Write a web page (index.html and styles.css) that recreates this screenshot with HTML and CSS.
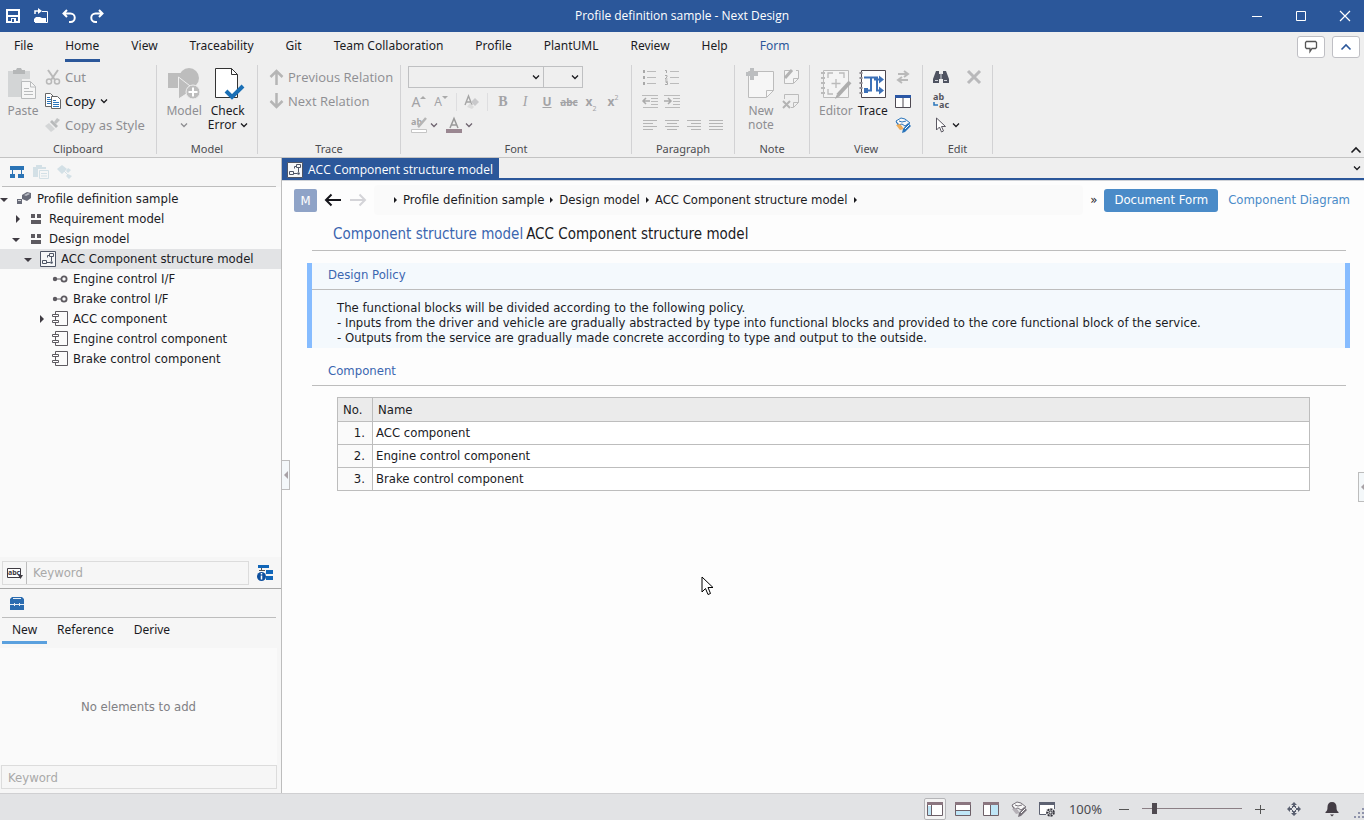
FILE: index.html
```html
<!DOCTYPE html>
<html lang="en">
<head>
    <meta charset="UTF-8">
    <title>Profile definition sample - Next Design</title>
    <link rel="stylesheet" href="styles.css">
</head>
<body>
<svg class="defs" width="0" height="0">
    <symbol id="caret" viewBox="0 0 8 8"><path d="M1 2.500l3 3 3-3" fill="none" stroke="currentColor" stroke-width="1.300"/></symbol>
    <symbol id="caret-up" viewBox="0 0 12 8"><path d="M1.500 6.500L6 2l4.500 4.500" fill="none" stroke="currentColor" stroke-width="1.600"/></symbol>
    <symbol id="struct" viewBox="0 0 16 16"><path d="M.5.5h15v15H.5z" fill="#f6f7f8" stroke="#4f5666"/><path d="M9.500 2.500h4v3h-4zM2.500 9.500h4v3h-4zM7.500 4.500h2M7.500 4.500v2M11.500 6v4M7 11.500h3" fill="none" stroke="#4f5666"/><circle cx="11.500" cy="11.500" r="1.300" fill="#4f5666"/></symbol>
    <symbol id="pkg" viewBox="0 0 12 12"><path d="M1 1h4v4H1zM7 1h4v4H7zM1 7h10v4H1z" fill="#5d5a60"/></symbol>
    <symbol id="iface" viewBox="0 0 16 8"><circle cx="3" cy="4" r="2.200" fill="#5d5a60"/><path d="M4 4h5" stroke="#5d5a60"/><circle cx="12" cy="4" r="2.600" fill="none" stroke="#5d5a60" stroke-width="1.800"/></symbol>
    <symbol id="comp" viewBox="0 0 16 16"><path d="M3.500 3V.5h12v14h-12V12M3.500 6v3" fill="none" stroke="#5d5a60"/><path d="M.5 3.500h6v2h-6zM.5 9.500h6v2h-6z" fill="#fff" stroke="#5d5a60"/></symbol>
    <symbol id="scan" viewBox="0 0 16 16"><path d="M1 4l5-3 4 1 5 4-5 3-3-2-4 1z" fill="#f8f8f8" stroke="var(--a)"/><path d="M4 4l3 1 4-1M1 5l6 5" fill="none" stroke="var(--a)"/><path d="M1 8l4 5 4-1-4-5z" fill="var(--b)"/><path d="M13 6l3 3-6 6-3 1 1-4z" fill="var(--a)"/><path d="M10 12l4-4" stroke="#fff"/></symbol>
</svg>

<header class="titlebar">
    <div class="quick">
        <button aria-label="Save"><svg width="16" height="16" viewBox="0 0 16 16"><path d="M2 2h12v12H2zM2 8h12" fill="none" stroke="#fff" stroke-width="2"/><path d="M6 10h5v4H6z" fill="#fff"/><path d="M7 11h2v3H7z" fill="#2b579a"/></svg></button>
        <button aria-label="Open"><svg width="16" height="16" viewBox="0 0 16 16"><path d="M9 3.500h5.500v11H2" fill="none" stroke="#fff"/><path d="M1 14v-3l2-2h4l2 1h4v4z" fill="#fff"/><path d="M2 6V3h4" fill="none" stroke="#fff" stroke-width="1.500"/><path d="M5 0l4 3-4 3z" fill="#fff"/></svg></button>
        <button aria-label="Undo"><svg width="16" height="16" viewBox="0 0 16 16"><path d="M6 2L2.500 5.500 6 9M3 5.500h6.500a4 4 0 010 8.500H8" fill="none" stroke="#fff" stroke-width="2"/></svg></button>
        <button aria-label="Redo"><svg width="16" height="16" viewBox="0 0 16 16"><path d="M10 2l3.500 3.500L10 9M13 5.500H6.500a4 4 0 000 8.500H8" fill="none" stroke="#fff" stroke-width="2"/></svg></button>
    </div>
    <h1>Profile definition sample - Next Design</h1>
    <div class="winbtns">
        <button aria-label="Minimize"><svg width="12" height="12" viewBox="0 0 12 12"><path d="M1 6.500h10" stroke="#fff"/></svg></button>
        <button aria-label="Maximize"><svg width="12" height="12" viewBox="0 0 12 12"><path d="M1.500 1.500h9v9h-9z" fill="none" stroke="#fff"/></svg></button>
        <button aria-label="Close"><svg width="12" height="12" viewBox="0 0 12 12"><path d="M1 1l10 10M11 1L1 11" stroke="#fff" stroke-width="1.200"/></svg></button>
    </div>
</header>

<nav class="menu">
    <button>File</button>
    <button class="active">Home</button>
    <button>View</button>
    <button>Traceability</button>
    <button>Git</button>
    <button>Team Collaboration</button>
    <button>Profile</button>
    <button>PlantUML</button>
    <button>Review</button>
    <button>Help</button>
    <button class="form">Form</button>
    <div class="menu-right">
        <button aria-label="Feedback"><svg width="14" height="14" viewBox="0 0 14 14"><path d="M2.500 1.500h9l1 1v5l-1 1H8L6 11.500V8.500H2.500l-1-1v-5z" fill="none" stroke="#555" stroke-width="1.300"/></svg></button>
        <button class="blue" aria-label="Collapse"><svg width="12" height="8"><use href="#caret-up"/></svg></button>
    </div>
</nav>

<div class="ribbon">
    <section class="group g-clip">
        <div class="body">
            <button class="big" disabled><svg width="32" height="36" viewBox="0 0 32 36"><path d="M1 4h22v8h-8v18H1z" fill="#d3d5d6"/><path d="M6 3h3l1-2h4l1 2h3v4H6z" fill="#b5b7b8"/><path d="M14.500 14.500h9l5 5v12h-14z" fill="#f6f6f6" stroke="#b9bbbc"/><path d="M23.500 15v5h5M17 21.500h5M17 24.500h9M17 27.500h9" fill="none" stroke="#b9bbbc"/></svg><span>Paste</span></button>
            <div class="rows">
                <button disabled><svg width="16" height="16" viewBox="0 0 16 16"><path d="M3 1l7 10M13 1L6 11" stroke="#b9b9b9" stroke-width="2"/><circle cx="4" cy="12.500" r="2.500" fill="none" stroke="#b9b9b9" stroke-width="1.500"/><circle cx="12" cy="12.500" r="2.500" fill="none" stroke="#b9b9b9" stroke-width="1.500"/></svg>Cut</button>
                <button><svg width="16" height="16" viewBox="0 0 16 16"><path d="M.5.5h5l3 3v10h-8z" fill="#fff" stroke="#666"/><path d="M2 4.500h3M2 6.500h4M2 8.500h4M2 10.500h4" stroke="#2a75bb"/><path d="M6.500 3.500h6l3 3v9h-9z" fill="#fff" stroke="#666"/><path d="M8 7.500h3M8 9.500h6M8 11.500h6M8 13.500h6" stroke="#2a75bb"/></svg>Copy<svg class="car" width="8" height="8"><use href="#caret"/></svg></button>
                <button disabled><svg width="16" height="16" viewBox="0 0 16 16"><path d="M12 1l3 2-4 4-2-2z" fill="#c1c3c4"/><path d="M7 3l6 6-2 2-6-6z" fill="#b8babb"/><path d="M4 6l6 6-4 3-6-6z" fill="#d4d6d7"/></svg>Copy as Style</button>
            </div>
        </div>
        <h2>Clipboard</h2>
    </section>
    <section class="group g-model">
        <div class="body">
            <button class="big" disabled><svg width="32" height="36" viewBox="0 0 32 36"><circle cx="21" cy="11" r="10" fill="#bdbdbd"/><path d="M0 6h15v15H0z" fill="#bdbdbd"/><path d="M10.500 10v22L26 22z" fill="#bdbdbd" stroke="#efefef"/><circle cx="25" cy="25" r="7" fill="#bdbdbd" stroke="#efefef"/><path d="M20.500 25h9M25 20.500v9" stroke="#fff" stroke-width="2"/></svg><span>Model</span><svg class="low" width="8" height="8"><use href="#caret"/></svg></button>
            <button class="big"><svg width="32" height="36" viewBox="0 0 32 36"><path d="M3.500 1.500h16l6 6v23h-22z" fill="#fff" stroke="#333"/><path d="M19.500 1.500v6h6" fill="none" stroke="#333"/><path d="M14 24l6 6 11-11" fill="none" stroke="#1a6fb5" stroke-width="4"/></svg><span>Check<br>Error <svg width="8" height="8"><use href="#caret"/></svg></span></button>
        </div>
        <h2>Model</h2>
    </section>
    <section class="group g-trace">
        <div class="body">
            <div class="rows">
                <button disabled><svg width="15" height="16" viewBox="0 0 15 16"><path d="M7.500 16V2M1.500 8l6-6 6 6" fill="none" stroke="#b5b5b5" stroke-width="2.500"/></svg>Previous Relation</button>
                <button disabled><svg width="15" height="16" viewBox="0 0 15 16"><path d="M7.500 0v14M1.500 8l6 6 6-6" fill="none" stroke="#b5b5b5" stroke-width="2.500"/></svg>Next Relation</button>
            </div>
        </div>
        <h2>Trace</h2>
    </section>
    <section class="group g-font">
        <div class="body rows">
            <div class="combos">
                <label class="combo wide"><select aria-label="Font family"><option></option></select><svg width="8" height="8"><use href="#caret"/></svg></label>
                <label class="combo"><select aria-label="Font size"><option></option></select><svg width="8" height="8"><use href="#caret"/></svg></label>
            </div>
            <div class="tools">
                <button disabled class="grow" aria-label="Grow font">A<svg width="6" height="12" viewBox="0 0 6 12"><path d="M3 0l3 3H0z" fill="#aaa"/></svg></button>
                <button disabled class="shrink" aria-label="Shrink font">A<svg width="6" height="12" viewBox="0 0 6 12"><path d="M0 0h6L3 3z" fill="#aaa"/></svg></button>
                <i class="sep"></i>
                <button disabled aria-label="Clear format"><svg width="16" height="16" viewBox="0 0 16 16"><path d="M1 11L4.500 2 8 11M2 8h5" fill="none" stroke="#a5a5a5" stroke-width="1.400"/><path d="M11 4l4 4-4 4-4-4z" fill="#c9c9cb"/><path d="M6 9l4 4-2 2-5-2z" fill="#dcdcdc"/></svg></button>
                <i class="sep"></i>
                <button disabled class="serif bold">B</button>
                <button disabled class="serif ital">I</button>
                <button disabled class="under">U</button>
                <button disabled class="strike">abc</button>
                <button disabled class="script">x<sub>2</sub></button>
                <button disabled class="script">x<sup>2</sup></button>
            </div>
            <div class="tools pair">
                <button disabled aria-label="Highlight"><svg width="16" height="16" viewBox="0 0 16 16"><text x="0" y="8" class="hl">ab</text><path d="M15 1l-6 7-2 2" stroke="#b5b5b5" stroke-width="2.500"/><path d="M.5 12.500h15v3H.5z" fill="#fff" stroke="#c5c5c5"/></svg></button>
                <svg width="8" height="8"><use href="#caret"/></svg>
                <button disabled aria-label="Font color"><svg width="16" height="16" viewBox="0 0 16 16"><path d="M4 11L8 1.500 12 11M5.500 8h5" fill="none" stroke="#999" stroke-width="1.500"/><path d="M0 12h16v4H0z" fill="#9a8791"/></svg></button>
                <svg width="8" height="8"><use href="#caret"/></svg>
            </div>
        </div>
        <h2>Font</h2>
    </section>
    <section class="group g-para">
        <div class="body rows">
            <div class="tools">
                <button disabled aria-label="Bullets"><svg width="16" height="16" viewBox="0 0 16 16"><path d="M5 2.500h9M5 8.500h9M5 14.500h9" stroke="#bbb"/><path d="M1 1h2v3H1zM1 7h2v3H1zM1 13h2v3H1z" fill="#a9a9a9"/></svg></button>
                <button disabled aria-label="Numbering"><svg width="16" height="16" viewBox="0 0 16 16"><path d="M6 2.500h9M6 8.500h9M6 14.500h9" stroke="#bbb"/><path d="M1 1.500h1.500V4M1 6.500h2v1.500l-2 2h2.500M1 12h2.500L2 13.500h1.500v2H1" fill="none" stroke="#a9a9a9"/></svg></button>
            </div>
            <div class="tools">
                <button disabled aria-label="Outdent"><svg width="16" height="16" viewBox="0 0 16 16"><path d="M0 2.500h16M9 5.500h7M9 8.500h7M9 11.500h7M1 14.500h15" stroke="#bbb"/><path d="M8 8H1M4 5L1 8l3 3" fill="none" stroke="#aaa" stroke-width="1.500"/></svg></button>
                <button disabled aria-label="Indent"><svg width="16" height="16" viewBox="0 0 16 16"><path d="M0 2.500h16M9 5.500h7M9 8.500h7M9 11.500h7M1 14.500h15" stroke="#bbb"/><path d="M0 8h7M4 5l3 3-3 3" fill="none" stroke="#aaa" stroke-width="1.500"/></svg></button>
            </div>
            <div class="tools">
                <button disabled aria-label="Left"><svg width="16" height="16" viewBox="0 0 16 16"><path d="M1 3.500h14M1 6.500h10M1 9.500h14M1 12.500h10" stroke="#b5b5b5"/></svg></button>
                <button disabled aria-label="Center"><svg width="16" height="16" viewBox="0 0 16 16"><path d="M1 3.500h14M3 6.500h10M1 9.500h14M3 12.500h10" stroke="#b5b5b5"/></svg></button>
                <button disabled aria-label="Right"><svg width="16" height="16" viewBox="0 0 16 16"><path d="M1 3.500h14M5 6.500h10M1 9.500h14M5 12.500h10" stroke="#b5b5b5"/></svg></button>
                <button disabled aria-label="Justify"><svg width="16" height="16" viewBox="0 0 16 16"><path d="M1 3.500h14M1 6.500h14M1 9.500h14M1 12.500h14" stroke="#b5b5b5"/></svg></button>
            </div>
        </div>
        <h2>Paragraph</h2>
    </section>
    <section class="group g-note">
        <div class="body">
            <button class="big" disabled><svg width="32" height="36" viewBox="0 0 32 36"><path d="M3.500 4.500h25v19l-7 7h-18z" fill="#f6f6f6" stroke="#bcbcbc"/><path d="M21.500 30v-6.500h7" fill="none" stroke="#bcbcbc"/><path d="M7 1v12M1 7h12" stroke="#bcbec0" stroke-width="4"/></svg><span>New<br>note</span></button>
            <div class="icons">
                <button disabled aria-label="Edit note"><svg width="16" height="16" viewBox="0 0 16 16"><path d="M8 1.500H1.500v13h9l5-5v-8H13" fill="#f4f4f4" stroke="#bbb"/><path d="M10.500 14V9.500h5" fill="none" stroke="#bbb"/><path d="M2 9l7-8" stroke="#b3b3b3" stroke-width="3"/></svg></button>
                <button disabled aria-label="Delete note"><svg width="16" height="16" viewBox="0 0 16 16"><path d="M1.500 6V1.500h14v8l-5 5H8" fill="none" stroke="#bbb"/><path d="M10.500 14V9.500h5" fill="none" stroke="#bbb"/><path d="M0 8l7 7M7 8l-7 7" stroke="#b3b3b3" stroke-width="2"/></svg></button>
            </div>
        </div>
        <h2>Note</h2>
    </section>
    <section class="group g-view">
        <div class="body">
            <button class="big" disabled><svg width="32" height="36" viewBox="0 0 32 36"><path d="M3.500 3.500h25v27h-25z" fill="#f4f4f4" stroke="#bbb"/><path d="M8 11V6h5M19 6h5v5M8 22v5h5M16 12v9M11.500 16.500h9" fill="none" stroke="#bbb" stroke-width="1.300"/><path d="M3 5v25" stroke="#bbb" stroke-width="4" stroke-dasharray="2 3"/><path d="M30 15L18 28" stroke="#adadad" stroke-width="4"/><path d="M17 27l3 2-5 3z" fill="#adadad"/></svg><span>Editor</span></button>
            <button class="big"><svg width="32" height="36" viewBox="0 0 32 36"><path d="M4.500 3.500h24v27h-24z" fill="#fff" stroke="#4e4950"/><path d="M4 5v25" stroke="#8d8a90" stroke-width="3" stroke-dasharray="2 3"/><path d="M7 10.500h13v13M10 23.500h4v-13M17 12.500h7M19 23.500h5" fill="none" stroke="#3c71b8" stroke-width="2"/><path d="M22 8.500l5 4-5 4zM22 19.500l5 4-5 4zM7 21h4v5H7z" fill="#3c71b8"/></svg><span>Trace</span></button>
            <div class="icons">
                <button disabled aria-label="Swap"><svg width="16" height="16" viewBox="0 0 16 16"><path d="M3 5h10M13 11H3M9 2l4 3-4 3M7 8l-4 3 4 3" fill="none" stroke="#b9b9b9" stroke-width="2"/></svg></button>
                <button aria-label="Split"><svg width="16" height="16" viewBox="0 0 16 16"><path d="M.5 2.500h15v12H.5zM8 5v9" fill="#fff" stroke="#4f4a52"/><path d="M0 2h16v3H0z" fill="#2b57a5"/></svg></button>
                <button class="scan-blue" aria-label="Inspect"><svg width="16" height="16"><use href="#scan"/></svg></button>
            </div>
        </div>
        <h2>View</h2>
    </section>
    <section class="group g-edit">
        <div class="body rows">
            <div class="tools">
                <button aria-label="Find"><svg width="16" height="16" viewBox="0 0 16 16"><path d="M3 2h3v3h4V2h3l3 8v4h-6v-4H6v4H0v-4z" fill="#4f5361"/><path d="M8 4v6M2 11.500h3M11 11.500h3" stroke="#d5d7dc"/></svg></button>
                <button class="del" disabled aria-label="Delete"><svg width="16" height="16" viewBox="0 0 16 16"><path d="M2 2l12 12M14 2L2 14" stroke="#b9b9bb" stroke-width="3"/></svg></button>
            </div>
            <div class="tools">
                <button aria-label="Replace"><svg width="18" height="18" viewBox="0 0 18 18"><text x="1" y="8" class="rep">ab</text><text x="7" y="16" class="rep">ac</text><path d="M2 10v3h4" fill="none" stroke="#2a75bb" stroke-width="1.500"/></svg></button>
            </div>
            <div class="tools">
                <button aria-label="Select"><svg width="16" height="16" viewBox="0 0 16 16"><path d="M3.500 1v12l3-3 2 5 2-1-2-4.500h4z" fill="#fff" stroke="#5b5862"/></svg></button>
                <svg width="8" height="8"><use href="#caret"/></svg>
            </div>
        </div>
        <h2>Edit</h2>
    </section>
    <button class="ribbon-fold" aria-label="Fold ribbon"><svg width="12" height="8"><use href="#caret-up"/></svg></button>
</div>

<div class="work">
    <aside class="side">
        <div class="side-tools">
            <button aria-label="Tree"><svg width="16" height="16" viewBox="0 0 16 16"><path d="M1 2h14v4H1zM1 10h5v4H1zM9 10h6v4H9z" fill="#2a73b5"/><path d="M3.500 6v4M12.500 6v4" stroke="#2a73b5"/></svg></button>
            <button disabled aria-label="Pages"><svg width="16" height="16" viewBox="0 0 16 16"><path d="M0 3h3V1h6v2h4v2H5v8H0z" fill="#d3e0e6"/><path d="M6.500 6.500h9v8h-9zM8 9.500h6M8 12h6" fill="none" stroke="#d3e0e6"/></svg></button>
            <button disabled aria-label="Relations"><svg width="16" height="16" viewBox="0 0 16 16"><path d="M5 1l5 4-5 5-5-5zM11 4l3 2-3 3-2-2zM11 10l4 2-3 3-3-3z" fill="#d3e0e6"/><path d="M5 5l7 7" stroke="#d3e0e6"/></svg></button>
        </div>
        <ul class="tree">
            <li class="l0 open"><em></em><svg width="14" height="14" viewBox="0 0 14 14"><path d="M5 3l5-3 4 1v5l-4 3-5-2z" fill="#686b78"/><path d="M7 3l4-2 2 1-4 2z" fill="#b9bbc3"/><path d="M0 7h5v5H0z" fill="#686b78"/><path d="M1 8.500h3" stroke="#d5d6db"/></svg><span>Profile definition sample</span></li>
            <li class="l1 closed"><em></em><svg width="12" height="12"><use href="#pkg"/></svg><span>Requirement model</span></li>
            <li class="l1 open"><em></em><svg width="12" height="12"><use href="#pkg"/></svg><span>Design model</span></li>
            <li class="l2 open selected"><em></em><svg width="16" height="16"><use href="#struct"/></svg><span>ACC Component structure model</span></li>
            <li class="l3"><em></em><svg width="16" height="8"><use href="#iface"/></svg><span>Engine control I/F</span></li>
            <li class="l3"><em></em><svg width="16" height="8"><use href="#iface"/></svg><span>Brake control I/F</span></li>
            <li class="l3 closed"><em></em><svg width="16" height="16"><use href="#comp"/></svg><span>ACC component</span></li>
            <li class="l3"><em></em><svg width="16" height="16"><use href="#comp"/></svg><span>Engine control component</span></li>
            <li class="l3"><em></em><svg width="16" height="16"><use href="#comp"/></svg><span>Brake control component</span></li>
        </ul>
        <div class="search">
            <div class="field">
                <button aria-label="Match mode"><svg width="18" height="14" viewBox="0 0 18 14"><path d="M1.500 2.500h13v9h-13z" fill="#fff" stroke="#3f3b42"/><text x="2" y="9" class="abc">abc</text><path d="M12 9h5l-2.500 4z" fill="#3f3b42"/></svg></button>
                <input type="text" placeholder="Keyword" aria-label="Search tree">
            </div>
            <button aria-label="Tree info"><svg width="16" height="16" viewBox="0 0 16 16"><path d="M1 0h11v3H1zM9 5h7v4H9zM9 11h7v4H9z" fill="#1166b8"/><path d="M4.500 3v3M2 5.500h6" stroke="#555"/><circle cx="4.500" cy="11.500" r="4.500" fill="#0d4f9e"/><path d="M4.500 10.500v4M4.500 8v1.500" stroke="#fff" stroke-width="1.500"/></svg></button>
        </div>
        <div class="side-tools second">
            <button aria-label="Toolbox"><svg width="16" height="16" viewBox="0 0 16 16"><path d="M3 1h10l2 2v11H1V3z" fill="#2b6cb0"/><path d="M4 2.500h8M1 8.500h14M5.500 7v3M10.500 7v3" stroke="#e8eef5"/></svg></button>
        </div>
        <div class="tabs">
            <button class="active">New</button>
            <button>Reference</button>
            <button>Derive</button>
        </div>
        <p class="empty">No elements to add</p>
        <input class="filter" type="text" placeholder="Keyword" aria-label="Filter elements">
        <button class="handle" aria-label="Collapse side panel"></button>
    </aside>

    <main class="editor">
        <div class="doc-tabs">
            <button class="doc-tab"><svg width="16" height="16"><use href="#struct"/></svg>ACC Component structure model</button>
            <button class="more" aria-label="More tabs"><svg width="8" height="8"><use href="#caret"/></svg></button>
        </div>
        <div class="nav">
            <span class="badge">M</span>
            <button aria-label="Back"><svg width="18" height="14" viewBox="0 0 18 14"><path d="M17 7H2M7.500 1.500L2 7l5.500 5.500" fill="none" stroke="#16161c" stroke-width="2"/></svg></button>
            <button disabled aria-label="Forward"><svg width="18" height="14" viewBox="0 0 18 14"><path d="M1 7h15M10.500 1.500L16 7l-5.500 5.500" fill="none" stroke="#d4d4d8" stroke-width="2"/></svg></button>
            <div class="crumbs">
                <i></i><a href="#">Profile definition sample</a>
                <i></i><a href="#">Design model</a>
                <i></i><a href="#">ACC Component structure model</a>
                <i></i>
            </div>
            <span class="chev">»</span>
            <button class="view on">Document Form</button>
            <button class="view">Component Diagram</button>
        </div>
        <div class="doc">
            <h3 class="doc-title"><span>Component structure model</span>ACC Component structure model</h3>
            <section class="policy">
                <h4>Design Policy</h4>
                <p>The functional blocks will be divided according to the following policy.<br>- Inputs from the driver and vehicle are gradually abstracted by type into functional blocks and provided to the core functional block of the service.<br>- Outputs from the service are gradually made concrete according to type and output to the outside.</p>
            </section>
            <section class="comps">
                <h4>Component</h4>
                <table>
                    <thead>
                        <tr><th class="no">No.</th><th>Name</th></tr>
                    </thead>
                    <tbody>
                        <tr><td class="no">1.</td><td>ACC component</td></tr>
                        <tr><td class="no">2.</td><td>Engine control component</td></tr>
                        <tr><td class="no">3.</td><td>Brake control component</td></tr>
                    </tbody>
                </table>
            </section>
        </div>
        <button class="handle right" aria-label="Expand inspector"></button>
    </main>
</div>

<footer class="status">
    <button class="on" aria-label="Left pane"><svg width="16" height="14" viewBox="0 0 16 14"><path d="M.5.5h15v13H.5z" fill="#fff" stroke="#6d6068"/><path d="M1 4h3v9H1z" fill="#bfe6f7"/><path d="M0 0h16v3H0z" fill="#8b7680"/><path d="M4.500 3v10" stroke="#6d6068"/></svg></button>
    <button aria-label="Bottom pane"><svg width="16" height="14" viewBox="0 0 16 14"><path d="M.5.5h15v13H.5z" fill="#fff" stroke="#6d6068"/><path d="M1 9h14v4H1z" fill="#bfe6f7"/><path d="M0 0h16v3H0z" fill="#8b7680"/><path d="M1 8.500h14" stroke="#6d6068"/></svg></button>
    <button aria-label="Right pane"><svg width="16" height="14" viewBox="0 0 16 14"><path d="M.5.5h15v13H.5z" fill="#fff" stroke="#6d6068"/><path d="M8 3h7v10H8z" fill="#bfe6f7"/><path d="M0 0h16v3H0z" fill="#8b7680"/><path d="M7.500 3v10" stroke="#6d6068"/></svg></button>
    <button class="scan-gray" aria-label="Inspect"><svg width="16" height="16"><use href="#scan"/></svg></button>
    <button aria-label="View settings"><svg width="16" height="16" viewBox="0 0 16 16"><path d="M.5 1.500h15v12H.5z" fill="#fff" stroke="#5d6272"/><path d="M0 1h16v3H0z" fill="#5d6272"/><path d="M7 8h9v7H7z" fill="#e2e3e5"/><circle cx="11.500" cy="11.500" r="3.300" fill="none" stroke="#33333b" stroke-width="2" stroke-dasharray="2 1"/><circle cx="11.500" cy="11.500" r="1.500" fill="none" stroke="#33333b"/></svg></button>
    <span class="pct">100%</span>
    <button aria-label="Zoom out"><svg width="10" height="10" viewBox="0 0 10 10"><path d="M0 5.500h10" stroke="#555"/></svg></button>
    <input type="range" min="0" max="100" value="10" aria-label="Zoom">
    <button aria-label="Zoom in"><svg width="10" height="10" viewBox="0 0 10 10"><path d="M0 5.500h10M5.500 1v9" stroke="#555"/></svg></button>
    <button class="fit" aria-label="Fit"><svg width="16" height="16" viewBox="0 0 16 16"><path d="M8 1l3 3H5zM8 15l3-3H5zM1 8l3-3v6zM15 8l-3-3v6z" fill="#5a6070"/><path d="M6 6h1M9 6h1M6 10h1M9 10h1M8 4v2M8 10v2M4 8h2M10 8h2" stroke="#5a6070" stroke-width="2"/></svg></button>
    <button class="bell" aria-label="Notifications"><svg width="14" height="16" viewBox="0 0 14 16"><path d="M7 1c3 0 4.500 2 4.500 5 0 3 .5 4 2 5v1H.5v-1c1.500-1 2-2 2-5 0-3 1.500-5 4.500-5z" fill="#433d45"/><path d="M5 13.500h4L7 15.500z" fill="#433d45"/></svg></button>
    <svg class="grip" width="10" height="10" viewBox="0 0 10 10"><path d="M8 0h2v2H8zM4 4h2v2H4zM8 4h2v2H8zM0 8h2v2H0zM4 8h2v2H4zM8 8h2v2H8z" fill="#8f93ab"/></svg>
</footer>

<svg class="pointer" width="13" height="20" viewBox="0 0 13 20"><path d="M1 1v15l3.500-3.500L7 18.500l2.500-1L7 11.500h5z" fill="#fff" stroke="#000"/></svg>
</body>
</html>
```
FILE: styles.css
```css
*{
    margin:0;
    padding:0;
    box-sizing: border-box;
    list-style: none;
}
html,body{
    height: 100%;
}
body{
    display: flex;
    flex-direction: column;
    overflow: hidden;
    background: #efefef;
    color: #1b1b1f;
    font: 13px/20px "Noto Sans", sans-serif;
}
button,input,select{
    font: inherit;
    color: inherit;
    border: none;
    background: none;
}
button{
    display: flex;
    align-items: center;
    justify-content: center;
    white-space: nowrap;
}
button:disabled{
    color: #8e8e92;
}
svg{
    flex: none;
    display: block;
    overflow: visible;
}
h1,h2,h3,h4,th{
    font-weight: normal;
    font-size: 13px;
}
.defs{
    position: absolute;
}

/* title bar */
.titlebar{
    display: grid;
    grid-template-columns: 1fr auto 1fr;
    align-items: center;
    height: 32px;
    flex: none;
    background: #2b579a;
    color: #fff;
}
.titlebar h1{
    font-family: "Open Sans", sans-serif;
    font-size: 12px;
}
.quick{
    display: flex;
    gap: 12px;
    padding-left: 5px;
}
.winbtns{
    display: flex;
    justify-content: flex-end;
}
.winbtns button{
    width: 44px;
    height: 32px;
}
.winbtns button:last-child{
    width: 38px;
    margin-left: 3px;
}

/* menu */
.menu{
    display: flex;
    gap: 31px;
    height: 30px;
    flex: none;
    padding-left: 14px;
}
.menu > button{
    padding: 1px 1px 0 0;
    border-bottom: 3px solid transparent;
    font-size: 12px;
}
.menu > .active{
    border-color: #2b579a;
}
.menu .form,.blue{
    color: #2b579a;
}
.menu-right{
    display: flex;
    gap: 7px;
    margin-left: auto;
    padding: 4px 4px 0 0;
}
.menu-right button{
    width: 28px;
    height: 22px;
    background: #fff;
    border: 1px solid #bfbfc4;
    border-radius: 3px;
}

/* ribbon */
.ribbon{
    display: flex;
    flex: none;
    padding: 3px 0;
    border-bottom: 1px solid #c3c3c3;
}
.group{
    display: flex;
    flex-direction: column;
    border-right: 1px solid #d2d2d4;
}
.group h2{
    color: #4c4c50;
    font-size: 11px;
    line-height: 10px;
    padding-top: 1px;
    text-align: center;
}
.body{
    display: flex;
    height: 78px;
}
.big{
    flex-direction: column;
    justify-content: flex-start;
    padding-top: 2px;
    font-size: 12px;
    line-height: 14px;
}
.big > svg{
    margin-bottom: 1px;
}
.big .low{
    margin-top: 3px;
}
.big span svg{
    display: inline-block;
}
.rows{
    display: flex;
    flex-direction: column;
}
.rows > button{
    height: 24px;
    gap: 4px;
    justify-content: flex-start;
}
.icons button{
    width: 20px;
    height: 24px;
}
.tools{
    display: flex;
    align-items: center;
    height: 24px;
}
.tools button{
    width: 22px;
    height: 22px;
}
.rows .car{
    margin-left: 1px;
}
.g-clip{
    width: 157px;
}
.g-clip .body{
    padding-left: 7px;
    gap: 6px;
}
.g-model{
    width: 101px;
}
.g-model .body{
    justify-content: center;
    gap: 6px;
}
.g-trace{
    width: 143px;
}
.g-trace .body{
    padding-left: 11px;
    font-family: "Open Sans", sans-serif;
}
.g-font{
    width: 231px;
}
.g-font .body{
    padding: 1px 0 0 7px;
}
.g-font .combos + .tools{
    height: 23px;
}
.combos{
    display: flex;
    height: 24px;
}
.combo{
    display: grid;
    width: 40px;
    height: 22px;
    margin-left: -1px;
    border: 1px solid #bfc0c2;
    align-items: center;
}
.combo.wide{
    width: 136px;
    margin-left: 0;
}
.combo select,.combo svg{
    grid-area: 1/1;
}
.combo select{
    appearance: none;
    width: 100%;
    height: 20px;
}
.combo svg{
    justify-self: end;
    margin-right: 3px;
}
.sep{
    width: 1px;
    height: 18px;
    margin: 0 4px;
    background: #dedee0;
}
.g-font .tools button{
    color: #a3a3a6;
}
.g-font .tools{
    color: #6f6470;
}
.grow{
    font-size: 14px;
}
.shrink{
    font-size: 12px;
}
.serif{
    font-family: "Liberation Serif", serif;
    font-size: 14px;
}
.bold{
    font-weight: bold;
}
.ital{
    font-style: italic;
}
.under{
    font-weight: bold;
    font-size: 12px;
    text-decoration: underline;
}
.strike{
    font-size: 10px;
    font-weight: bold;
    text-decoration: line-through;
}
.script{
    font-size: 12px;
    font-weight: bold;
}
.script sub,.script sup{
    font-size: 7px;
    line-height: 8px;
    font-weight: normal;
}
.script sub{
    align-self: flex-end;
}
.script sup{
    align-self: flex-start;
    padding-top: 3px;
}
.hl,.rep,.abc{
    font-family: "Noto Sans", sans-serif;
    font-weight: bold;
    font-size: 9px;
    fill: #a5a5a5;
}
.rep{
    fill: #55555c;
}
.abc{
    font-size: 7px;
    fill: #3f3b42;
}
.pair svg{
    margin-right: 5px;
}
.pair button svg{
    margin: 0;
}
.g-para{
    width: 103px;
}
.g-para .body{
    padding-left: 7px;
}
.g-note{
    width: 75px;
}
.g-note .body{
    padding-left: 10px;
    gap: 4px;
}
.g-view{
    width: 113px;
}
.g-view .body{
    padding-left: 9px;
    gap: 4px;
}
.g-edit{
    width: 70px;
}
.g-edit .body{
    padding-left: 7px;
}
.del{
    margin-left: 11px;
}
.scan-blue{
    --a: #2a75bb;
    --b: #f0ad58;
}
.scan-gray{
    --a: #77727a;
    --b: #b5b1b7;
}
.ribbon-fold{
    margin: auto 2px 0 auto;
}

/* side panel */
.work{
    display: flex;
    flex: 1;
    min-height: 0;
    font-family: "DejaVu Sans Condensed", "Noto Sans", sans-serif;
}
.side{
    position: relative;
    display: flex;
    flex-direction: column;
    width: 282px;
    flex: none;
    background: #f6f6f6;
    border-right: 1px solid #bdbdbd;
}
.side-tools{
    display: flex;
    gap: 8px;
    height: 29px;
    margin: 0 5px 0 2px;
    padding-left: 7px;
    border-bottom: 1px solid #bdbdbd;
}
.side-tools.second{
    padding-top: 2px;
}
.tree{
    flex: 1;
    padding-top: 2px;
    background: #fafafa;
}
.tree li{
    display: flex;
    align-items: center;
    gap: 5px;
    height: 20px;
}
.tree .selected{
    background: #e2e3e5;
}
.tree span{
    white-space: nowrap;
}
.tree em{
    width: 8px;
    margin-right: 4px;
}
.open em::before{
    content: "";
    display: block;
    border: 4px solid transparent;
    border-top-color: #3f3b42;
    margin-top: 5px;
}
.closed em::before{
    content: "";
    display: block;
    border: 4px solid transparent;
    border-left-color: #3f3b42;
    margin-left: 4px;
}
.tree .l0 svg{
    margin-right: 1px;
}
.l1{
    padding-left: 12px;
}
.l2{
    padding-left: 24px;
}
.tree .l2 em{
    margin-right: 3px;
}
.l3{
    padding-left: 36px;
}
.tree .l3 em{
    margin-right: 3px;
}
.tree .l1 svg{
    margin: 0 2px 0 1px;
}
.search{
    display: flex;
    align-items: center;
    gap: 8px;
    height: 32px;
    padding: 0 8px 0 2px;
    border-bottom: 1px solid #a8a8a8;
}
.field{
    display: flex;
    flex: 1;
    height: 24px;
    border: 1px solid #dcdcdc;
}
.field button{
    width: 24px;
    border-right: 1px solid #bdbdbd;
}
.field input{
    flex: 1;
    min-width: 0;
    padding-left: 6px;
}
input::placeholder{
    color: #a9a9a9;
}
.tabs{
    display: flex;
    height: 26px;
    padding-left: 2px;
    font-family: "Noto Sans", sans-serif;
}
.tabs button{
    padding: 0 10px;
    border-bottom: 3px solid transparent;
    font-size: 12px;
}
.tabs .active{
    border-color: #5aa0de;
}
.empty{
    display: flex;
    align-items: center;
    justify-content: center;
    height: 117px;
    margin: 4px 4px 0 0;
    background: #fafafa;
    color: #808084;
}
.filter{
    height: 24px;
    margin: 0 4px 4px 1px;
    padding-left: 6px;
    border: 1px solid #dcdcdc;
}
.handle{
    position: absolute;
    top: 302px;
    left: 281px;
    z-index: 1;
    width: 9px;
    height: 30px;
    background: #f4f8fa;
    border: 1px solid #bdbdbd;
}
.handle::before{
    content: "";
    border: 4px solid transparent;
    border-right-color: #a8a2a6;
    border-left: none;
}
.handle.right{
    top: 314px;
    right: -3px;
    left: auto;
}

/* editor */
.editor{
    position: relative;
    flex: 1;
    min-width: 0;
    background: #fdfdfd;
    overflow: hidden;
}
.doc-tabs{
    display: flex;
    justify-content: space-between;
    height: 22px;
    background: #efefef;
    border-bottom: 2px solid #2b579a;
}
.doc-tab{
    gap: 5px;
    padding: 3px 6px 0 5px;
    background: #2b579a;
    color: #fff;
    font-family: "Open Sans", sans-serif;
    font-size: 12px;
}
.more{
    padding-right: 3px;
}
.nav{
    display: flex;
    align-items: center;
    gap: 7px;
    padding: 4px 14px 0 12px;
    border-top: 1px solid #d0d3d8;
}
.badge{
    width: 23px;
    line-height: 23px;
    border-radius: 2px;
    background: #8fa3c7;
    color: #fff;
    text-align: center;
}
.crumbs{
    display: flex;
    align-items: center;
    flex: 1;
    gap: 6px;
    height: 30px;
    padding-left: 20px;
    border-radius: 4px;
    background: #fafafa;
    white-space: nowrap;
}
.crumbs a{
    color: inherit;
    text-decoration: none;
}
.crumbs i{
    border: 3px solid transparent;
    border-left-color: #1b1b1f;
    border-right: none;
}
.view{
    height: 23px;
    border-radius: 3px;
    color: #4a8bc8;
}
.view.on{
    padding: 0 10px;
    margin-right: 3px;
    background: #4a8bc8;
    color: #fff;
}
.doc{
    padding: 6px 14px 0 25px;
}
.doc-title{
    margin: 0 4px 0 5px;
    padding: 3px 0 6px 21px;
    border-bottom: 1px solid #bdbdbd;
    font-size: 15px;
}
.doc-title span,.doc h4{
    color: #3b66b0;
}
.doc-title span{
    margin-right: 3px;
}
.doc h4{
    line-height: 24px;
    padding: 0 0 2px 16px;
    border-bottom: 1px solid #bdbdbd;
}
.policy{
    margin-top: 12px;
    background: #f4f9fd;
    border: solid #86bcff;
    border-width: 0 5px;
}
.policy p{
    padding: 10px 24px 3px 25px;
    line-height: 15px;
}
.comps{
    padding: 11px 4px 0 5px;
}
table{
    width: calc(100% - 61px);
    margin: 11px 0 0 25px;
    border-collapse: collapse;
}
th,td{
    height: 23px;
    border: 1px solid #bdbdbd;
    padding: 0 3px;
    text-align: left;
    background: #fff;
}
th{
    height: 24px;
    padding: 0 5px;
    background: #ebebeb;
}
.no{
    width: 35px;
}
td.no{
    padding-right: 7px;
    background: #fafafa;
    text-align: right;
}

/* status bar */
.status{
    display: flex;
    align-items: center;
    justify-content: flex-end;
    flex: none;
    height: 27px;
    padding-top: 3px;
    background: #e2e3e5;
    border-top: 1px solid #d0d0d2;
    color: #4a4a50;
}
.status button{
    width: 28px;
    height: 22px;
}
.status .on{
    width: 22px;
    margin: 0 3px;
    background: #f3f3f3;
    border: 1px solid #b5b5b8;
    border-radius: 2px;
}
.pct{
    margin: 0 8px;
}
.status input{
    appearance: none;
    width: 100px;
    height: 12px;
    margin: 0 4px;
    background: linear-gradient(#8b7f85,#8b7f85) center/100% 1px no-repeat;
}
.status input::-webkit-slider-thumb{
    appearance: none;
    width: 5px;
    height: 11px;
    background: #4f4a50;
}
.status .fit{
    margin: 0 10px 0 6px;
}
.grip{
    align-self: flex-end;
    margin: 0 0 2px 8px;
}
.pointer{
    position: absolute;
    top: 576px;
    left: 701px;
}
```
